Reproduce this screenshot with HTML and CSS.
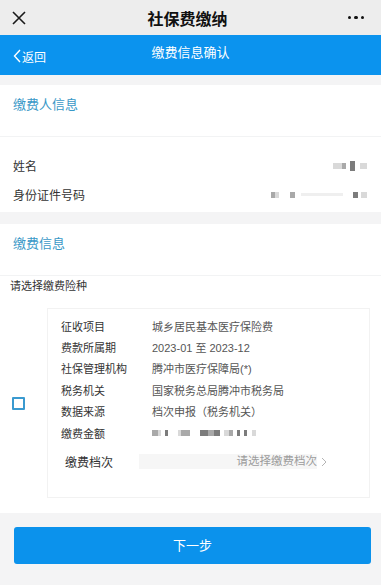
FILE: index.html
```html
<!DOCTYPE html>
<html>
<head>
  <meta charset="utf-8">
  <title>社保费缴纳</title>
  <link rel="stylesheet" href="styles.css">
</head>
<body>
  <div class="topbar">
    <svg class="close" width="16" height="16" viewBox="0 0 16 16">
      <path d="M2 2 L14 14 M14 2 L2 14" stroke="#1a1a1a" stroke-width="1.6" fill="none"/>
    </svg>
    <div class="topbar-title">社保费缴纳</div>
    <div class="more"><span></span><span></span><span></span></div>
  </div>

  <div class="navbar">
    <div class="back">
      <svg width="8" height="14" viewBox="0 0 8 14">
        <path d="M7 1 L1.5 7 L7 13" stroke="#fff" stroke-width="1.4" fill="none"/>
      </svg>
      <span>返回</span>
    </div>
    <div class="nav-title">缴费信息确认</div>
  </div>

  <div class="gap gap-top"></div>

  <div class="section">
    <div class="section-title">缴费人信息</div>
    <div class="info">
      <div class="info-row">
        <span>姓名</span>
        <span class="blur">
          <i class="px l" style="width:9px"></i><i class="px m" style="width:4px"></i><i class="sp" style="width:4px"></i><i class="px d tall" style="width:5px"></i><i class="sp" style="width:5px"></i><i class="px l" style="width:7px"></i>
        </span>
      </div>
      <div class="info-row">
        <span>身份证件号码</span>
        <span class="blur">
          <i class="px m" style="width:4px"></i><i class="px l" style="width:4px"></i><i class="sp" style="width:11px"></i><i class="px m" style="width:5px"></i><i class="sp" style="width:6px"></i><i class="px xl" style="width:42px"></i><i class="sp" style="width:10px"></i><i class="px d" style="width:5px"></i><i class="sp" style="width:3px"></i><i class="px l" style="width:6px"></i>
        </span>
      </div>
    </div>
  </div>

  <div class="gap gap-mid"></div>

  <div class="section section-pay">
    <div class="section-title">缴费信息</div>
    <div class="hint">请选择缴费险种</div>
    <div class="pick">
      <div class="check-col"><div class="checkbox"></div></div>
      <div class="card">
        <div class="card-row"><span class="k">征收项目</span><span>城乡居民基本医疗保险费</span></div>
        <div class="card-row"><span class="k">费款所属期</span><span>2023-01 至 2023-12</span></div>
        <div class="card-row"><span class="k">社保管理机构</span><span>腾冲市医疗保障局(*)</span></div>
        <div class="card-row"><span class="k">税务机关</span><span>国家税务总局腾冲市税务局</span></div>
        <div class="card-row"><span class="k">数据来源</span><span>档次申报（税务机关）</span></div>
        <div class="card-row">
          <span class="k">缴费金额</span>
          <span class="blur">
            <i class="px m" style="width:6px"></i><i class="px l" style="width:3px"></i><i class="sp" style="width:4px"></i><i class="px d" style="width:3px"></i><i class="sp" style="width:10px"></i><i class="px l" style="width:3px"></i><i class="px m" style="width:9px"></i><i class="sp" style="width:10px"></i><i class="px d" style="width:8px"></i><i class="px m" style="width:6px"></i><i class="px d" style="width:6px"></i><i class="sp" style="width:4px"></i><i class="px l" style="width:5px"></i><i class="px m" style="width:4px"></i><i class="sp" style="width:4px"></i><i class="px d" style="width:3px"></i><i class="sp" style="width:4px"></i><i class="px d" style="width:3px"></i><i class="sp" style="width:5px"></i><i class="px l" style="width:4px"></i>
          </span>
        </div>
        <div class="grade-row">
          <span class="grade-label">缴费档次</span>
          <div class="grade-input">请选择缴费档次</div>
          <svg class="chev" width="6" height="10" viewBox="0 0 6 10">
            <path d="M1 1 L5 5 L1 9" stroke="#b5b5b5" stroke-width="1" fill="none"/>
          </svg>
        </div>
      </div>
    </div>
  </div>

  <div class="footer">
    <div class="next-btn">下一步</div>
  </div>
</body>
</html>
```

FILE: styles.css
```css
body {
  margin: 0;
  width: 381px;
  height: 585px;
  overflow: hidden;
  background: #f4f4f5;
  font-family: "Liberation Sans", "Noto Sans CJK SC", sans-serif;
  color: #333;
}

.topbar {
  height: 35px;
  background: #ededed;
  display: flex;
  align-items: center;
  justify-content: space-between;
  padding: 0 16px 0 11px;
}

.topbar-title {
  font-size: 16px;
  font-weight: bold;
  color: #111;
}

.more {
  display: flex;
  gap: 3px;
  width: 17px;
}

.more span {
  width: 3.5px;
  height: 3.5px;
  border-radius: 50%;
  background: #111;
}

.navbar {
  height: 40px;
  background: #0b93ee;
  display: flex;
  align-items: center;
  position: relative;
  color: #fff;
}

.back {
  display: flex;
  align-items: center;
  gap: 1px;
  margin-left: 13px;
  margin-top: 2px;
  font-size: 12px;
}

.nav-title {
  position: absolute;
  left: 0;
  right: 0;
  top: 7px;
  text-align: center;
  font-size: 13px;
  pointer-events: none;
}

.gap-top {
  height: 10px;
}

.gap-mid {
  height: 12px;
}

.section {
  background: #fff;
}

.section-title {
  height: 52px;
  box-sizing: border-box;
  padding: 12px 0 0 13px;
  line-height: 16px;
  font-size: 13px;
  color: #3998c7;
  border-bottom: 1px solid #f2f3f4;
}

.info {
  padding: 14px 0 3px;
}

.info-row {
  height: 29px;
  display: flex;
  align-items: center;
  justify-content: space-between;
  padding: 0 14px 0 13px;
  font-size: 12px;
  color: #333;
}

.blur {
  display: flex;
  align-items: center;
  height: 10px;
}

.blur i {
  display: block;
  height: 6px;
}

.px.l { background: #d9d9d9; }
.px.m { background: #a9a9a9; }
.px.d { background: #7c7c7c; }
.px.xl { background: #efefef; height: 3px; }
.px.tall { height: 10px; }

.hint {
  font-size: 11px;
  line-height: 20px;
  padding-left: 10px;
  color: #333;
}

.pick {
  display: flex;
  align-items: center;
  padding: 12px 11px 15px 0;
}

.check-col {
  width: 47px;
}

.checkbox {
  width: 9px;
  height: 9px;
  margin-left: 12px;
  border: 2px solid #3a9ad0;
  border-radius: 1px;
}

.card {
  flex: 1;
  border: 1px solid #f2f2f2;
  padding: 6px 0 25px 13px;
  font-size: 11px;
  color: #444;
}

.card-row {
  display: flex;
  align-items: center;
  height: 21.4px;
}

.card-row .k {
  width: 91px;
  color: #333;
}

.card-row span:last-child {
  color: #555;
}

.grade-row {
  display: flex;
  align-items: center;
  height: 21px;
  margin-top: 8px;
  padding-left: 4px;
}

.grade-label {
  width: 74px;
  font-size: 12px;
  color: #333;
}

.grade-input {
  width: 178px;
  height: 15px;
  line-height: 15px;
  background: #f6f6f6;
  text-align: right;
  font-size: 11.5px;
  color: #9c9c9c;
}

.chev {
  margin-left: 4px;
}

.footer {
  background: #f4f4f5;
  padding: 14px 10px 0 14px;
}

.next-btn {
  height: 37px;
  line-height: 37px;
  background: #0b92ec;
  border-radius: 3px;
  text-align: center;
  color: #fff;
  font-size: 13px;
}
```
